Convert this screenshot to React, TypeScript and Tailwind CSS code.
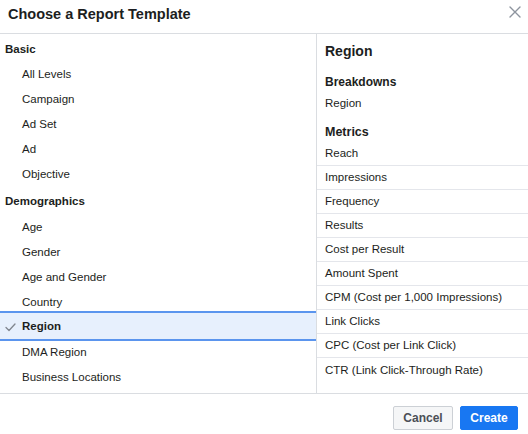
import React from "react";

const font = { fontFamily: '"Liberation Sans", Arial, sans-serif' };

type Row = { type: "header"; label: string } | { type: "item"; label: string; selected?: boolean };

const rows: Row[] = [
  { type: "header", label: "Basic" },
  { type: "item", label: "All Levels" },
  { type: "item", label: "Campaign" },
  { type: "item", label: "Ad Set" },
  { type: "item", label: "Ad" },
  { type: "item", label: "Objective" },
  { type: "header", label: "Demographics" },
  { type: "item", label: "Age" },
  { type: "item", label: "Gender" },
  { type: "item", label: "Age and Gender" },
  { type: "item", label: "Country" },
  { type: "item", label: "Region", selected: true },
  { type: "item", label: "DMA Region" },
  { type: "item", label: "Business Locations" },
];

const metrics = [
  "Reach",
  "Impressions",
  "Frequency",
  "Results",
  "Cost per Result",
  "Amount Spent",
  "CPM (Cost per 1,000 Impressions)",
  "Link Clicks",
  "CPC (Cost per Link Click)",
  "CTR (Link Click-Through Rate)",
];

export default function App() {
  return (
    <div className="w-[528px] h-[434px] bg-white text-[#1c1e21] flex flex-col overflow-hidden" style={font}>
      <div className="h-[34px] shrink-0 border-b border-[#dadde1] flex items-start justify-between pl-[8px] pr-[7px] pt-[5px]">
        <div className="text-[14.5px] leading-[18px] font-bold">Choose a Report Template</div>
        <svg width="12" height="12" viewBox="0 0 12 12" className="mt-[1px]">
          <path d="M1 1L11 11M11 1L1 11" stroke="#8d949e" strokeWidth="1.4" strokeLinecap="round" />
        </svg>
      </div>
      <div className="flex h-[360px] shrink-0 border-b border-[#dadde1]">
        <div className="w-[317px] shrink-0 border-r border-[#dadde1] pt-[2px] flex flex-col">
          {rows.map((r, i) =>
            r.type === "header" ? (
              <div
                key={i}
                className={`${i === 0 ? "h-[26px]" : "h-[28px]"} flex items-center pl-[5px] pt-[1px] text-[11.5px] font-bold`}
              >
                {r.label}
              </div>
            ) : r.selected ? (
              <div
                key={i}
                className="-mt-[4px] -mb-[1px] h-[30px] bg-[#e7f0fd] border-y-2 border-[#5b95ee] flex items-center pt-[2px] relative z-10"
              >
                <svg width="11" height="9" viewBox="0 0 11 9" className="ml-[5px] mr-[6px]">
                  <path d="M1 4.5L4 7.5L10 1" stroke="#80868f" strokeWidth="1.3" fill="none" strokeLinecap="round" strokeLinejoin="round" />
                </svg>
                <span className="text-[11.5px] font-bold">{r.label}</span>
              </div>
            ) : (
              <div key={i} className="h-[25px] flex items-center pl-[22px] pt-[1px] text-[11.5px]">
                {r.label}
              </div>
            )
          )}
        </div>
        <div className="flex-1 flex flex-col pt-[8px]">
          <div className="h-[18px] flex items-center pl-[8px] pt-[1px] text-[14px] font-bold">Region</div>
          <div className="mt-[12px] h-[18px] flex items-center pl-[8px] pt-[1px] text-[12px] font-bold">Breakdowns</div>
          <div className="mt-[4px] h-[18px] flex items-center pl-[8px] pt-[1px] text-[11.5px]">Region</div>
          <div className="mt-[11px] h-[18px] flex items-center pl-[8px] pt-[1px] text-[12.5px] font-bold">Metrics</div>
          <div className="mt-[1px] flex flex-col">
            {metrics.map((m, i) => (
              <div
                key={m}
                className={`h-[24px] flex items-center pl-[8px] pt-[1px] text-[11.5px] ${
                  i < metrics.length - 1 ? "border-b border-[#e4e6eb]" : ""
                }`}
              >
                {m}
              </div>
            ))}
          </div>
        </div>
      </div>
      <div className="flex justify-end gap-[7px] pt-[12px] pr-[10px]">
        <button className="w-[60px] h-[24px] rounded-[2px] bg-[#f5f6f7] border border-[#ccd0d5] text-[#4b4f56] text-[12px] font-bold">
          Cancel
        </button>
        <button className="w-[58px] h-[24px] rounded-[2px] bg-[#1877f2] border border-[#1877f2] text-white text-[12px] font-bold">
          Create
        </button>
      </div>
    </div>
  );
}
